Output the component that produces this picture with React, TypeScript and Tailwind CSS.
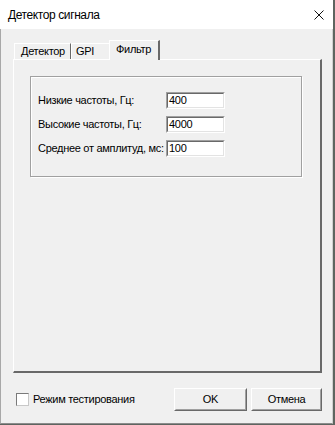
import React from 'react';

const FONT = { fontFamily: '"Liberation Sans", Arial, sans-serif' };

interface FieldRowProps {
  label: string;
  value: string;
}

const FieldRow: React.FC<FieldRowProps> = ({ label, value }) => (
  <div className="flex items-center h-[17px]">
    <span className="w-[128px] text-[11px] tracking-[-0.3px] text-black whitespace-nowrap">{label}</span>
    <div className="w-[59px] h-[17px] border-t border-l border-b border-r border-t-[#a0a0a0] border-l-[#a0a0a0] border-b-white border-r-white">
      <div className="h-full border-t border-l border-b border-r border-t-[#696969] border-l-[#696969] border-b-[#e3e3e3] border-r-[#e3e3e3] bg-white flex items-center pl-[1px] text-[11px] tracking-[-0.3px] text-black">
        {value}
      </div>
    </div>
  </div>
);

interface ButtonProps {
  label: string;
  width: string;
}

const ClassicButton: React.FC<ButtonProps> = ({ label, width }) => (
  <div
    className={`${width} h-[23px] border border-t-white border-l-white border-r-[#696969] border-b-[#696969]`}
  >
    <div className="h-full border border-t-[#f0f0f0] border-l-[#f0f0f0] border-r-[#a0a0a0] border-b-[#a0a0a0] bg-[#f0f0f0] flex items-center justify-center text-[11px] tracking-[-0.3px] text-black">
      {label}
    </div>
  </div>
);

export default function App() {
  return (
    <div className="w-[335px] h-[425px] bg-[#5e6560] flex items-start" style={FONT}>
      <div className="w-[333px] h-[424px] flex flex-col bg-[#f0f0f0]">
        {/* title bar */}
        <div className="h-[29px] bg-white flex items-center justify-between pl-[8px] pr-[8px]">
          <span className="text-[12px] tracking-[-0.4px] text-black">Детектор сигнала</span>
          <svg width="10" height="10" viewBox="0 0 10 10" className="mr-[1px]">
            <path d="M0.5 0.5 L9.5 9.5 M9.5 0.5 L0.5 9.5" stroke="#111" strokeWidth="1" fill="none" />
          </svg>
        </div>

        {/* body */}
        <div className="flex-1 flex flex-col border-l border-b border-r border-l-[#a8a8a8] border-b-[#8c8c8c] border-r-[#cfcfcf] pl-[12px] pt-[11px]">
          {/* tabs */}
          <div className="h-[19px] flex items-end pl-[1px]">
            <div className="w-[57px] h-[16px] border-t border-l border-r border-t-white border-l-white border-r-[#696969] flex items-center pl-[6px] text-[11px] tracking-[-0.3px] text-black">
              Детектор
            </div>
            <div className="w-[38px] h-[16px] border-t border-l border-t-white border-l-white flex items-center pl-[4px] text-[11px] tracking-[-0.3px] text-black">
              GPI
            </div>
            <div className="relative z-10 -mb-px w-[51px] h-[20px] border-t border-l border-r-2 border-t-white border-l-white border-r-[#696969] bg-[#f0f0f0] flex items-center pl-[6px] pb-[2px] text-[11px] tracking-[-0.3px] text-black">
              Фильтр
            </div>
          </div>

          {/* tab panel */}
          <div className="w-[309px] h-[314px] border-t border-l border-r-2 border-b-2 border-t-white border-l-white border-r-[#696969] border-b-[#696969] pl-[16px] pt-[16px]">
            <div className="w-[272px] h-[101px] border border-[#a0a0a0] shadow-[inset_1px_1px_0_#fff,1px_1px_0_#fff] pl-[7px] pt-[15px] flex flex-col gap-[7px]">
              <FieldRow label="Низкие частоты, Гц:" value="400" />
              <FieldRow label="Высокие частоты, Гц:" value="4000" />
              <FieldRow label="Среднее от амплитуд, мс:" value="100" />
            </div>
          </div>

          {/* bottom row */}
          <div className="mt-[15px] h-[23px] flex items-center">
            <div className="ml-[3px] w-[13px] h-[13px] border border-t-[#7a7a7a] border-l-[#7a7a7a] border-r-[#c8c8c8] border-b-[#c8c8c8] bg-white" />
            <span className="ml-[4px] text-[11px] tracking-[-0.3px] text-black">Режим тестирования</span>
            <div className="ml-auto flex gap-[4px] mr-[10px]">
              <ClassicButton label="OK" width="w-[73px]" />
              <ClassicButton label="Отмена" width="w-[71px]" />
            </div>
          </div>
        </div>
      </div>
    </div>
  );
}
